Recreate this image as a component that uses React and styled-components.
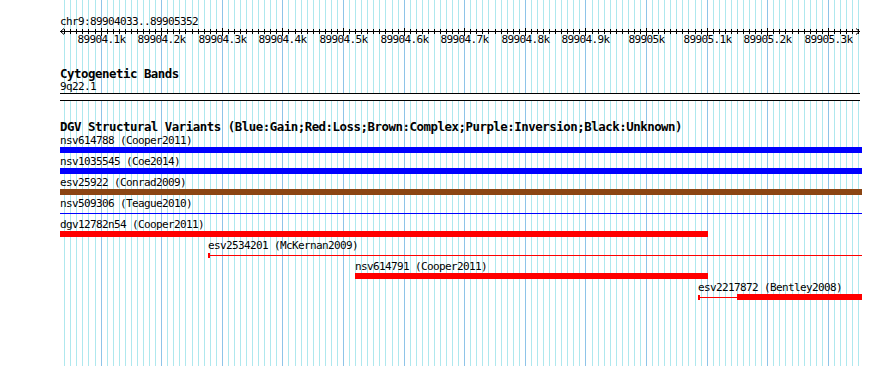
import styled, { createGlobalStyle } from "styled-components";

const START = 89904033;
const END = 89905352;
const LEFT = 60;
const WIDTH = 800;

// genome coordinate -> pixel column on the page
const xOf = (bp) => Math.round(LEFT + ((bp - START) * WIDTH) / (END - START + 1));

const GlobalStyle = createGlobalStyle`
  html, body {
    margin: 0;
    padding: 0;
    background: #ffffff;
  }
`;

const Page = styled.div`
  position: relative;
  width: 890px;
  height: 366px;
  overflow: hidden;
  background: #ffffff;
  font-family: "DejaVu Sans Mono", "Liberation Mono", monospace;
  color: #000000;
`;

const GridLayer = styled.svg`
  position: absolute;
  top: 0;
  left: 0;
`;

const Tracks = styled.div`
  position: relative;
  width: ${WIDTH}px;
  padding: 15px 0 0 ${LEFT}px;
  display: flex;
  flex-direction: column;
`;

const SmallText = styled.div`
  font-size: 11px;
  letter-spacing: -0.62px;
  line-height: 13px;
  height: 13px;
  white-space: pre;
`;

const TrackTitle = styled.div`
  font-size: 12.4px;
  letter-spacing: -0.47px;
  font-weight: bold;
  line-height: 13px;
  height: 13px;
  white-space: pre;
  margin-top: ${(p) => p.$gap}px;
`;

const Axis = styled.svg`
  display: block;
  overflow: visible;
`;

const TickLabels = styled.div`
  position: relative;
  height: 13px;
`;

const TickLabel = styled.span`
  position: absolute;
  top: 0;
  font-size: 11px;
  letter-spacing: -0.62px;
  line-height: 13px;
  white-space: pre;
  transform: translateX(-50%);
`;

const BandBox = styled.div`
  height: 6px;
  border-top: 1px solid #000000;
  border-bottom: 1px solid #000000;
  background: #ffffff;
`;

const FeatureList = styled.div`
  margin-top: 1px;
  display: flex;
  flex-direction: column;
`;

const FeatureRow = styled.div`
  height: 21px;
  display: flex;
  flex-direction: column;
`;

const Glyph = styled.div`
  height: 6px;
  display: flex;
  align-items: center;
`;

const Box = styled.div`
  height: 6px;
  flex: none;
  background: ${(p) => p.$color};
`;

const Line = styled.div`
  height: 1px;
  flex: none;
  background: ${(p) => p.$color};
`;

const EndTick = styled.div`
  width: 2px;
  height: 5px;
  flex: none;
  background: ${(p) => p.$color};
`;

const BLUE = "#0000ff";
const RED = "#ff0000";
const BROWN = "#8b4513";

const features = [
  { name: "nsv614788", study: "Cooper2011", color: BLUE, parts: [["box", START, END + 4]] },
  { name: "nsv1035545", study: "Coe2014", color: BLUE, parts: [["box", START, END + 4]] },
  { name: "esv25922", study: "Conrad2009", color: BROWN, parts: [["box", START, END + 4]] },
  { name: "nsv509306", study: "Teague2010", color: BLUE, parts: [["line", START, END + 4]] },
  { name: "dgv12782n54", study: "Cooper2011", color: RED, parts: [["box", START, 89905102]] },
  {
    name: "esv2534201",
    study: "McKernan2009",
    color: RED,
    parts: [["tick", 89904277], ["line", 89904280, END + 4]],
  },
  { name: "nsv614791", study: "Cooper2011", color: RED, parts: [["box", 89904520, 89905102]] },
  {
    name: "esv2217872",
    study: "Bentley2008",
    color: RED,
    parts: [["tick", 89905086], ["line", 89905089, 89905150], ["box", 89905150, END + 4]],
  },
];

const majorTicks = [];
for (let bp = 89904100; bp <= END; bp += 100) majorTicks.push(bp);

const minorTicks = [];
for (let bp = 89904040; bp <= END; bp += 10) minorTicks.push(bp);

const tickText = (bp) => `${parseFloat((bp / 1000).toFixed(1))}k`;

const Grid = () => (
  <GridLayer width="890" height="366" shapeRendering="crispEdges">
    {minorTicks.map((bp) => {
      const x = xOf(bp) + 0.5;
      const major = bp % 100 === 0;
      return (
        <line
          key={bp}
          x1={x}
          x2={x}
          y1="0"
          y2="366"
          stroke={major ? "#8ec4e8" : "#aee8ee"}
          strokeWidth="1"
        />
      );
    })}
  </GridLayer>
);

const Ruler = () => (
  <>
    <SmallText>chr9:89904033..89905352</SmallText>
    <Axis width={WIDTH} height="5" shapeRendering="crispEdges">
      <line x1="0" x2={WIDTH} y1="3.5" y2="3.5" stroke="#000" />
      <path d={`M4 0.5 L0.5 3.5 L4 6.5 M${WIDTH - 4} 0.5 L${WIDTH - 0.5} 3.5 L${WIDTH - 4} 6.5`} stroke="#000" fill="none" shapeRendering="auto" />
      {minorTicks.map((bp) => {
        const x = xOf(bp) - LEFT + 0.5;
        const major = bp % 100 === 0;
        return (
          <line
            key={bp}
            x1={x}
            x2={x}
            y1={major ? 0 : 1}
            y2={major ? 8 : 6}
            stroke="#000"
          />
        );
      })}
    </Axis>
    <TickLabels>
      {majorTicks.map((bp) => (
        <TickLabel key={bp} style={{ left: xOf(bp) - LEFT + 0.5 }}>
          {tickText(bp)}
        </TickLabel>
      ))}
    </TickLabels>
  </>
);

const Feature = ({ f }) => {
  const first = f.parts[0][1];
  const offset = xOf(first) - LEFT;
  return (
    <FeatureRow>
      <SmallText style={{ marginLeft: offset }}>{`${f.name} (${f.study})`}</SmallText>
      <Glyph style={{ marginLeft: offset }}>
        {f.parts.map(([kind, s, e], i) => {
          if (kind === "tick") return <EndTick key={i} $color={f.color} />;
          const w = xOf(e) - xOf(s);
          const Part = kind === "box" ? Box : Line;
          return <Part key={i} $color={f.color} style={{ width: w }} />;
        })}
      </Glyph>
    </FeatureRow>
  );
};

export default function App() {
  return (
    <>
      <GlobalStyle />
      <Page>
        <Grid />
        <Tracks>
          <Ruler />
          <TrackTitle $gap={21}>Cytogenetic Bands</TrackTitle>
          <SmallText>9q22.1</SmallText>
          <BandBox />
          <TrackTitle $gap={19}>
            DGV Structural Variants (Blue:Gain;Red:Loss;Brown:Complex;Purple:Inversion;Black:Unknown)
          </TrackTitle>
          <FeatureList>
            {features.map((f) => (
              <Feature key={f.name} f={f} />
            ))}
          </FeatureList>
        </Tracks>
      </Page>
    </>
  );
}
